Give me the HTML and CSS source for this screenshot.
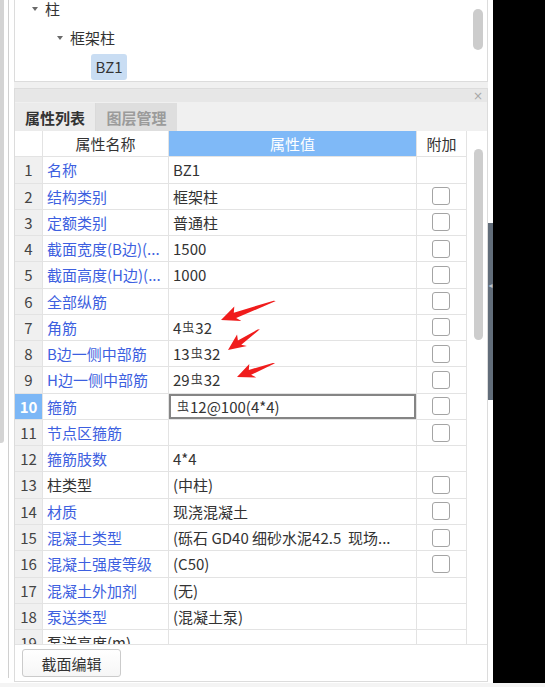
FILE: index.html
```html
<!DOCTYPE html>
<html lang="zh-CN">
<head>
<meta charset="utf-8">
<title>属性列表</title>
<link rel="stylesheet" href="styles.css">
</head>
<body>
<div class="screen">
  <div class="left-rail">
    <div class="rail-track"><div class="rail-thumb"></div></div>
  </div>
  <div class="main">
    <div class="tree-panel">
      <div class="tree">
        <div class="tree-row lvl1"><span class="caret"></span><span>柱</span></div>
        <div class="tree-row lvl2"><span class="caret"></span><span>框架柱</span></div>
        <div class="tree-row lvl3"><span class="leaf">BZ1</span></div>
      </div>
      <div class="tree-scroll"></div>
    </div>
    <div class="gap"></div>
    <div class="prop-panel">
      <div class="titlebar"><span class="close">×</span></div>
      <div class="tabs">
        <div class="tab active">属性列表</div>
        <div class="tab">图层管理</div>
      </div>
      <div class="table-wrap">
        <div class="grid">
          <div class="c num hd"></div>
          <div class="c name hd center">属性名称</div>
          <div class="c val hd hv center">属性值</div>
          <div class="c ext hd center">附加</div>

          <div class="c num">1</div><div class="c name">名称</div><div class="c val">BZ1</div><div class="c ext"></div>
          <div class="c num">2</div><div class="c name">结构类别</div><div class="c val">框架柱</div><div class="c ext"><span class="cb"></span></div>
          <div class="c num">3</div><div class="c name">定额类别</div><div class="c val">普通柱</div><div class="c ext"><span class="cb"></span></div>
          <div class="c num">4</div><div class="c name">截面宽度(B边)(...</div><div class="c val">1500</div><div class="c ext"><span class="cb"></span></div>
          <div class="c num">5</div><div class="c name">截面高度(H边)(...</div><div class="c val">1000</div><div class="c ext"><span class="cb"></span></div>
          <div class="c num">6</div><div class="c name">全部纵筋</div><div class="c val"></div><div class="c ext"><span class="cb"></span></div>
          <div class="c num">7</div><div class="c name">角筋</div><div class="c val">4<span class="rb">虫</span>32</div><div class="c ext"><span class="cb"></span></div>
          <div class="c num">8</div><div class="c name">B边一侧中部筋</div><div class="c val">13<span class="rb">虫</span>32</div><div class="c ext"><span class="cb"></span></div>
          <div class="c num">9</div><div class="c name">H边一侧中部筋</div><div class="c val">29<span class="rb">虫</span>32</div><div class="c ext"><span class="cb"></span></div>
          <div class="c num sel">10</div><div class="c name">箍筋</div><div class="c val"><div class="editor"><span class="rb">虫</span>12@100(4*4)</div></div><div class="c ext"><span class="cb"></span></div>
          <div class="c num">11</div><div class="c name">节点区箍筋</div><div class="c val"></div><div class="c ext"><span class="cb"></span></div>
          <div class="c num">12</div><div class="c name">箍筋肢数</div><div class="c val">4*4</div><div class="c ext"></div>
          <div class="c num">13</div><div class="c name dark">柱类型</div><div class="c val">(中柱)</div><div class="c ext"><span class="cb"></span></div>
          <div class="c num">14</div><div class="c name">材质</div><div class="c val">现浇混凝土</div><div class="c ext"><span class="cb"></span></div>
          <div class="c num">15</div><div class="c name">混凝土类型</div><div class="c val">(砾石 GD40 细砂水泥42.5&nbsp;&nbsp;现场...</div><div class="c ext"><span class="cb"></span></div>
          <div class="c num">16</div><div class="c name">混凝土强度等级</div><div class="c val">(C50)</div><div class="c ext"><span class="cb"></span></div>
          <div class="c num">17</div><div class="c name">混凝土外加剂</div><div class="c val">(无)</div><div class="c ext"></div>
          <div class="c num">18</div><div class="c name">泵送类型</div><div class="c val">(混凝土泵)</div><div class="c ext"></div>
          <div class="c num">19</div><div class="c name dark">泵送高度(m)</div><div class="c val"></div><div class="c ext"></div>
        </div>
        <div class="vscroll"><div class="vthumb"></div></div>
      </div>
      <div class="footer"><button class="btn">截面编辑</button></div>
    </div>
  </div>
  <div class="right-rail"><div class="handle">◂</div></div>
  <div class="black"></div>
</div>
<div class="bottom-strip"></div>
<svg class="arrows" width="545" height="687" viewBox="0 0 545 687">
  <g fill="#f01c1c">
    <path transform="translate(221,320) rotate(-19)" d="M0,0 L17,-8.5 L14.5,-2.8 L56,-1.1 L58,0 L15,3 L19,7.5 Z"/>
    <path transform="translate(228,350) rotate(-33)" d="M0,0 L16,-8 L13.5,-2.6 L36,-1 L38,0 L14,2.8 L18,7 Z"/>
    <path transform="translate(237,377) rotate(-20)" d="M0,0 L16,-8 L13.5,-2.6 L38.5,-1 L40.5,0 L14,2.8 L18,7 Z"/>
  </g>
</svg>
</body>
</html>
```

FILE: styles.css
```css
* { box-sizing: border-box; }

html, body {
  margin: 0;
  padding: 0;
  background: #ffffff;
}

body {
  width: 545px;
  height: 687px;
  overflow: hidden;
  position: relative;
  font-family: "Noto Sans CJK SC", "Noto Sans", sans-serif;
  font-size: 15px;
  color: #333333;
}

.screen {
  display: flex;
  height: 683px;
}

/* left outer rail */
.left-rail {
  width: 14px;
  flex: none;
  display: flex;
}

.rail-track {
  width: 9px;
  height: 678px;
  border-right: 1px solid #d0d0d0;
  background: #ffffff;
}

.rail-thumb {
  width: 4px;
  height: 443px;
  background: #d4d4d4;
  border-radius: 0 0 3px 0;
}

/* main column */
.main {
  width: 474px;
  flex: none;
  display: flex;
  flex-direction: column;
}

.tree-panel {
  height: 82px;
  border: 1px solid #dcdcdc;
  border-top: none;
  display: flex;
  overflow: hidden;
  background: #ffffff;
}

.tree {
  flex: 1;
}

.tree-row {
  height: 29px;
  display: flex;
  align-items: center;
  line-height: 16px;
  color: #333333;
}

.lvl1 { padding-left: 17px; height: 17px; margin-bottom: 6px; }
.lvl2 { padding-left: 42px; }
.lvl3 { padding-left: 76px; }

.caret {
  width: 0;
  height: 0;
  border-left: 3.5px solid transparent;
  border-right: 3.5px solid transparent;
  border-top: 4px solid #6a6a6a;
  margin-right: 7px;
}

.leaf {
  height: 26px;
  width: 36px;
  display: flex;
  align-items: center;
  justify-content: center;
  background: #c9ddf3;
  border-radius: 3px;
}

.tree-scroll {
  width: 10px;
  height: 41px;
  margin: 9px 4px 0 0;
  background: #cccccc;
  border-radius: 5px;
}

.gap {
  height: 6px;
  background: #f0f0f0;
}

/* property panel */
.prop-panel {
  height: 594px;
  border: 1px solid #dcdcdc;
  display: flex;
  flex-direction: column;
  background: #ffffff;
}

.titlebar {
  height: 13px;
  background: #e7e7e7;
  display: flex;
  justify-content: flex-end;
  align-items: center;
  padding-right: 4px;
}

.close {
  font-family: "DejaVu Sans", sans-serif;
  font-size: 12px;
  line-height: 12px;
  color: #a8a8a8;
}

.tabs {
  height: 29px;
  background: #f0f0f0;
  display: flex;
  align-items: flex-end;
}

.tab {
  width: 81px;
  height: 28px;
  display: flex;
  align-items: center;
  justify-content: center;
  font-weight: bold;
  color: #9b9b9b;
  background: #dedede;
}

.tab.active {
  color: #333333;
  background: #ebebeb;
  border-right: 1px solid #dadada;
}

.table-wrap {
  height: 514px;
  display: flex;
  border-bottom: 1px solid #e3e3e3;
  overflow: hidden;
}

.grid {
  display: grid;
  grid-template-columns: 28px 126px 248px 50px;
  grid-auto-rows: 26.27px;
  align-content: start;
  height: 513px;
  overflow: hidden;
}

.c {
  border-right: 1px solid #e3e3e3;
  border-bottom: 1px solid #e3e3e3;
  padding: 0 4px;
  line-height: 25px;
  white-space: nowrap;
  overflow: hidden;
  background: #ffffff;
}

.center { text-align: center; }

.num {
  background: #f0f0f0;
  text-align: center;
  padding: 0;
  color: #444444;
}

.num.sel {
  background: #7cb7f6;
  color: #ffffff;
  font-weight: bold;
}

.hd.num { background: #ffffff; }

.hv {
  background: #7fb9f7;
  color: #ffffff;
}

.name { color: #3d5fe0; }
.name.hd { color: #333333; }
.name.dark { color: #333333; }

.ext {
  display: flex;
  align-items: center;
  justify-content: center;
  padding: 0;
}

.cb {
  width: 18px;
  height: 18px;
  border: 1.5px solid #a4a4a4;
  border-radius: 3px;
  background: #ffffff;
  margin-right: 1px;
}

.rb {
  font-size: 12px;
  position: relative;
  top: -2px;
  margin: 0 1px;
  color: #444444;
}

.val .editor {
  margin: 0 -4px;
  height: 25px;
  border: 2px solid #858585;
  padding-left: 5px;
  line-height: 21px;
}

.vscroll {
  width: 20px;
  flex: none;
}

.vthumb {
  width: 9px;
  height: 191px;
  margin: 18px 0 0 7px;
  background: #cdcdcd;
  border-radius: 5px;
}

.footer {
  flex: 1;
  padding: 4px 0 0 7px;
}

.btn {
  width: 99px;
  height: 28px;
  border: 1px solid #cbcbcb;
  border-radius: 3px;
  background: linear-gradient(#ffffff, #f6f6f6);
  font-family: "Noto Sans CJK SC", sans-serif;
  font-size: 15px;
  color: #333333;
  padding: 0;
}

/* right rail and black area */
.right-rail {
  width: 5px;
  flex: none;
  background: #ffffff;
}

.handle {
  margin-top: 223px;
  height: 177px;
  background: #626d7a;
  color: #b9c0c8;
  font-size: 8px;
  line-height: 10px;
  padding-top: 58px;
  overflow: hidden;
  text-align: center;
  font-family: "DejaVu Sans", sans-serif;
}

.black {
  flex: 1;
  background: #000000;
}

.bottom-strip {
  height: 4px;
  background: #f4f4f4;
}

.arrows {
  position: absolute;
  left: 0;
  top: 0;
  pointer-events: none;
}
```
